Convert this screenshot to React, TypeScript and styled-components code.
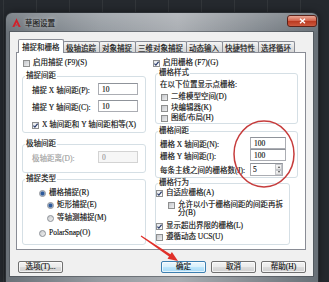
import styled, { createGlobalStyle } from "styled-components";

const GlobalStyle = createGlobalStyle`
    * { box-sizing: border-box; }
    html, body { margin: 0; padding: 0; }
    body {
        background: #24282d;
        font-family: "Liberation Serif", "Noto Sans CJK SC", serif;
        font-size: 7.5px;
        color: #111111;
        -webkit-text-stroke: 0.15px currentColor;
    }
`;

const Desktop = styled.div`
    position: relative;
    width: 329px;
    height: 282px;
    overflow: hidden;
    padding: 13px 0 0 6px;
    background-color: #25292e;
    background-image: repeating-linear-gradient(
        90deg,
        rgba(255, 255, 255, 0.06) 0 1px,
        transparent 1px 33px
    );
    background-position: 3px 0;
`;

const Window = styled.div`
    width: 312px;
    height: 269px;
    padding: 0 5px 6px 4px;
    border-radius: 6px 6px 0 0;
    background: linear-gradient(180deg, rgba(255, 255, 255, 0.16), rgba(255, 255, 255, 0) 20px),
        linear-gradient(90deg, #6a7178 0%, #959ba1 30%, #a9adb2 55%, #858b91 80%, #687077 100%);
    box-shadow: 0 0 0 1px #2a2e33, 0 0 8px rgba(0, 0, 0, 0.55);
    display: flex;
    flex-direction: column;
`;

const TitleBar = styled.div`
    height: 19px;
    display: flex;
    align-items: center;
    gap: 4px;
    padding-left: 2px;
`;

const Title = styled.span`
    flex: 1;
    color: #1c1c1c;
    text-shadow: 0 0 4px rgba(255, 255, 255, 0.7);
`;

const CloseButton = styled.div`
    align-self: flex-start;
    margin-top: 2px;
    margin-right: -4px;
    width: 30px;
    height: 12px;
    border: 1px solid #5b2219;
    border-radius: 3px;
    background: linear-gradient(180deg, #e9a896 0%, #d4664f 45%, #b9381f 50%, #cc5a3f 100%);
    display: flex;
    align-items: center;
    justify-content: center;
`;

const Client = styled.div`
    height: 244px;
    background: #f0f0f0;
    padding: 8px 7px 0 6px;
    box-shadow: 0 0 0 1px rgba(60, 66, 72, 0.5);
`;

const TabStrip = styled.div`
    position: relative;
    z-index: 1;
    display: flex;
    align-items: flex-end;
    height: 12px;
    padding-left: 2px;
`;

const Tab = styled.div<{ $active?: boolean }>`
    display: flex;
    align-items: center;
    height: ${({ $active }) => ($active ? "14px" : "11px")};
    margin-bottom: ${({ $active }) => ($active ? "-1px" : "0")};
    margin-left: -1px;
    padding: 0 ${({ $active }) => ($active ? "3px" : "2.5px")};
    border: 1px solid #898c95;
    border-bottom: none;
    border-radius: 2px 2px 0 0;
    background: ${({ $active }) =>
        $active ? "#ffffff" : "linear-gradient(180deg, #f5f5f5, #e1e1e1 55%, #d6d6d6)"};
    white-space: nowrap;
    &:first-child {
        margin-left: 0;
    }
`;

const Panel = styled.div`
    position: relative;
    height: 198px;
    border: 1px solid #898c95;
    background: #ffffff;
    padding: 5px 0 0 5px;
    display: grid;
    grid-template-columns: 124px 146px;
    column-gap: 6px;
    align-items: start;
`;

const Column = styled.div`
    display: flex;
    flex-direction: column;
`;

const Row = styled.div<{ $mt?: number; $indent?: number }>`
    display: flex;
    align-items: center;
    gap: 3px;
    height: 10px;
    line-height: 10px;
    margin-top: ${({ $mt }) => $mt ?? 0}px;
    padding-left: ${({ $indent }) => $indent ?? 0}px;
    white-space: nowrap;
`;

const WrapRow = styled.div<{ $mt?: number; $indent?: number }>`
    display: flex;
    align-items: flex-start;
    gap: 3px;
    margin-top: ${({ $mt }) => $mt ?? 0}px;
    padding-left: ${({ $indent }) => $indent ?? 0}px;
`;

const WrapText = styled.span`
    width: 108px;
    line-height: 8px;
`;

const Box = styled.span<{ $checked?: boolean; $offset?: number }>`
    flex: none;
    width: 7px;
    height: 7px;
    margin-top: ${({ $offset }) => $offset ?? 0}px;
    border: 1px solid #8e8f8f;
    background: ${({ $checked }) =>
        $checked
            ? "linear-gradient(135deg, #e3e6ea, #ffffff)"
            : "linear-gradient(135deg, #c4c6ca, #eeeff0)"};
    display: flex;
    align-items: center;
    justify-content: center;
`;

const Radio = styled.span<{ $checked?: boolean }>`
    flex: none;
    width: 7px;
    height: 7px;
    border-radius: 50%;
    border: 1px solid #8b8f96;
    background: ${({ $checked }) =>
        $checked
            ? "radial-gradient(circle, #2e5a9a 0 1.4px, #8ea6c8 2.2px, #eef1f5 3px)"
            : "linear-gradient(135deg, #c8cacd, #f2f2f2)"};
`;

const Group = styled.fieldset<{ $mt?: number; $ml?: number; $w: number }>`
    margin: ${({ $mt }) => $mt ?? 0}px 0 0 ${({ $ml }) => $ml ?? 0}px;
    width: ${({ $w }) => $w}px;
    min-width: 0;
    padding: 0;
    border: 1px solid #d5dfe5;
    border-radius: 3px;
`;

const Legend = styled.legend`
    margin-left: 2px;
    padding: 0 1px;
    line-height: 10px;
    white-space: nowrap;
`;

const GroupBody = styled.div<{ $pad: string }>`
    display: flex;
    flex-direction: column;
    padding: ${({ $pad }) => $pad};
`;

const FieldRow = styled.div<{ $mt?: number; $h?: number }>`
    display: flex;
    align-items: center;
    height: ${({ $h }) => $h ?? 12}px;
    margin-top: ${({ $mt }) => $mt ?? 0}px;
`;

const FieldLabel = styled.span<{ $w: number; $disabled?: boolean }>`
    width: ${({ $w }) => $w}px;
    flex: none;
    white-space: nowrap;
    color: ${({ $disabled }) => ($disabled ? "#a2a2a2" : "inherit")};
`;

const TextField = styled.input<{ $w: number }>`
    width: ${({ $w }) => $w}px;
    height: 12px;
    padding: 0 3px;
    border: 1px solid #abadb3;
    border-top-color: #8f939a;
    background: #ffffff;
    font: inherit;
    color: #111111;
    outline: none;
    &:disabled {
        background: #f6f6f6;
        border-color: #d3d3d3;
        color: #9c9c9c;
    }
`;

const SpinBox = styled.div`
    display: flex;
    width: 33px;
    height: 13px;
    border: 1px solid #abadb3;
    border-top-color: #8f939a;
    background: #ffffff;
`;

const SpinInput = styled.input`
    flex: 1;
    min-width: 0;
    padding: 0 2px;
    border: none;
    background: transparent;
    font: inherit;
    color: #111111;
    outline: none;
`;

const SpinButtons = styled.div`
    width: 7px;
    display: flex;
    flex-direction: column;
`;

const SpinButton = styled.span<{ $down?: boolean }>`
    flex: 1;
    display: flex;
    align-items: center;
    justify-content: center;
    border: 1px solid #c4c6ca;
    background: linear-gradient(180deg, #f6f6f6, #e4e4e4);
    &::after {
        content: "";
        border-left: 1.5px solid transparent;
        border-right: 1.5px solid transparent;
        ${({ $down }) =>
            $down ? "border-top: 2px solid #4a4a4a;" : "border-bottom: 2px solid #4a4a4a;"}
    }
`;

const ButtonBar = styled.div`
    display: flex;
    justify-content: space-between;
    margin-top: 11px;
    padding-left: 2px;
`;

const ButtonGroup = styled.div`
    display: flex;
    gap: 5px;
`;

const Button = styled.button<{ $default?: boolean }>`
    width: 45px;
    height: 12px;
    padding: 0;
    font: inherit;
    line-height: 10px;
    color: #111111;
    border: 1px solid ${({ $default }) => ($default ? "#3c7fb1" : "#707070")};
    border-radius: 2px;
    background: ${({ $default }) =>
        $default
            ? "linear-gradient(180deg, #eaf6fd, #d9f0fc 50%, #bee6fd 50%, #a7d9f5)"
            : "linear-gradient(180deg, #f2f2f2, #ebebeb 50%, #dddddd 50%, #cfcfcf)"};
    box-shadow: inset 0 0 0 1px rgba(255, 255, 255, 0.7);
`;

const Overlay = styled.svg`
    position: absolute;
    left: 0;
    top: 0;
    width: 329px;
    height: 282px;
    pointer-events: none;
`;

const Check = () => (
    <svg width="5" height="5" viewBox="0 0 5 5">
        <polyline points="0.4,2.6 1.9,4.1 4.6,0.7" fill="none" stroke="#2b3c6a" strokeWidth="1.2" />
    </svg>
);

const CheckItem = ({
    label,
    checked,
    mt,
    indent,
}: {
    label: string;
    checked?: boolean;
    mt?: number;
    indent?: number;
}) => (
    <Row $mt={mt} $indent={indent}>
        <Box $checked={checked}>{checked && <Check />}</Box>
        <span>{label}</span>
    </Row>
);

const RadioItem = ({
    label,
    checked,
    mt,
    indent,
}: {
    label: string;
    checked?: boolean;
    mt?: number;
    indent?: number;
}) => (
    <Row $mt={mt} $indent={indent}>
        <Radio $checked={checked} />
        <span>{label}</span>
    </Row>
);

const tabs = ["捕捉和栅格", "极轴追踪", "对象捕捉", "三维对象捕捉", "动态输入", "快捷特性", "选择循环"];

export default function App() {
    return (
        <>
            <GlobalStyle />
            <Desktop>
                <Window>
                    <TitleBar>
                        <svg width="9" height="9" viewBox="0 0 9 9">
                            <polygon points="0.3,9 4.5,0.2 8.7,9 6.6,9 4.5,4.4 2.4,9" fill="#d0202a" />
                            <polygon points="3.3,7.6 5.7,7.6 5.2,6.6 3.8,6.6" fill="#d0202a" />
                        </svg>
                        <Title>草图设置</Title>
                        <CloseButton>
                            <svg width="7" height="6" viewBox="0 0 7 6">
                                <path d="M1 0.8 L6 5.2 M6 0.8 L1 5.2" stroke="#ffffff" strokeWidth="1.4" />
                            </svg>
                        </CloseButton>
                    </TitleBar>
                    <Client>
                        <TabStrip>
                            {tabs.map((t, i) => (
                                <Tab key={t} $active={i === 0}>
                                    {t}
                                </Tab>
                            ))}
                        </TabStrip>
                        <Panel>
                            <Column>
                                <CheckItem label="启用捕捉 (F9)(S)" indent={1} />
                                <Group $w={124} $mt={3}>
                                    <Legend>捕捉间距</Legend>
                                    <GroupBody $pad="2px 0 2px 9px">
                                        <FieldRow>
                                            <FieldLabel $w={66}>捕捉 X 轴间距(P):</FieldLabel>
                                            <TextField $w={40} readOnly defaultValue="10" />
                                        </FieldRow>
                                        <FieldRow $mt={5}>
                                            <FieldLabel $w={66}>捕捉 Y 轴间距(C):</FieldLabel>
                                            <TextField $w={40} readOnly defaultValue="10" />
                                        </FieldRow>
                                        <CheckItem label="X 轴间距和 Y 轴间距相等(X)" checked mt={8} />
                                    </GroupBody>
                                </Group>
                                <Group $w={124} $mt={6}>
                                    <Legend>极轴间距</Legend>
                                    <GroupBody $pad="2px 0 9px 9px">
                                        <FieldRow>
                                            <FieldLabel $w={66} $disabled>
                                                极轴距离(D):
                                            </FieldLabel>
                                            <TextField $w={40} disabled defaultValue="0" />
                                        </FieldRow>
                                    </GroupBody>
                                </Group>
                                <Group $w={124} $mt={1}>
                                    <Legend>捕捉类型</Legend>
                                    <GroupBody $pad="4px 0 6px 16px">
                                        <RadioItem label="栅格捕捉(R)" checked />
                                        <RadioItem label="矩形捕捉(E)" checked mt={2} indent={8} />
                                        <RadioItem label="等轴测捕捉(M)" mt={3} indent={8} />
                                        <RadioItem label="PolarSnap(O)" mt={5} />
                                    </GroupBody>
                                </Group>
                            </Column>
                            <Column>
                                <CheckItem label="启用栅格 (F7)(G)" checked indent={1} />
                                <Group $w={143} $ml={3}>
                                    <Legend>栅格样式</Legend>
                                    <GroupBody $pad="2px 0 0 4px">
                                        <Row>在以下位置显示点栅格:</Row>
                                        <CheckItem label="二维模型空间(D)" mt={2} indent={1} />
                                        <CheckItem label="块编辑器(K)" mt={1} indent={1} />
                                        <CheckItem label="图纸/布局(H)" indent={1} />
                                    </GroupBody>
                                </Group>
                                <Group $w={143} $ml={3} $mt={2}>
                                    <Legend>栅格间距</Legend>
                                    <GroupBody $pad="1px 0 1px 4px">
                                        <FieldRow>
                                            <FieldLabel $w={90}>栅格 X 轴间距(N):</FieldLabel>
                                            <TextField $w={36} readOnly defaultValue="100" />
                                        </FieldRow>
                                        <FieldRow>
                                            <FieldLabel $w={90}>栅格 Y 轴间距(I):</FieldLabel>
                                            <TextField $w={36} readOnly defaultValue="100" />
                                        </FieldRow>
                                        <FieldRow $mt={2} $h={13}>
                                            <FieldLabel $w={90}>每条主线之间的栅格数(J):</FieldLabel>
                                            <SpinBox>
                                                <SpinInput readOnly defaultValue="5" />
                                                <SpinButtons>
                                                    <SpinButton />
                                                    <SpinButton $down />
                                                </SpinButtons>
                                            </SpinBox>
                                        </FieldRow>
                                    </GroupBody>
                                </Group>
                                <Group $w={135} $ml={3}>
                                    <Legend>栅格行为</Legend>
                                    <GroupBody $pad="0 0 2px 0">
                                        <CheckItem label="自适应栅格(A)" checked />
                                        <WrapRow $mt={3} $indent={12}>
                                            <Box $offset={1} />
                                            <WrapText>允许以小于栅格间距的间距再拆分(B)</WrapText>
                                        </WrapRow>
                                        <CheckItem label="显示超出界限的栅格(L)" checked mt={4} />
                                        <CheckItem label="遵循动态 UCS(U)" mt={1} />
                                    </GroupBody>
                                </Group>
                            </Column>
                        </Panel>
                        <ButtonBar>
                            <Button>选项(T)...</Button>
                            <ButtonGroup>
                                <Button $default>确定</Button>
                                <Button>取消</Button>
                                <Button>帮助(H)</Button>
                            </ButtonGroup>
                        </ButtonBar>
                    </Client>
                </Window>
                <Overlay viewBox="0 0 329 282">
                    <ellipse cx="264" cy="154" rx="30" ry="33" fill="none" stroke="#c63c3c" strokeWidth="1.5" />
                    <polygon
                        points="141.3,235.6 170.4,254.3 171.9,252.1 178,261 167.5,258.7 169,256.5 140.7,236.4"
                        fill="#e0302a"
                    />
                </Overlay>
            </Desktop>
        </>
    );
}
